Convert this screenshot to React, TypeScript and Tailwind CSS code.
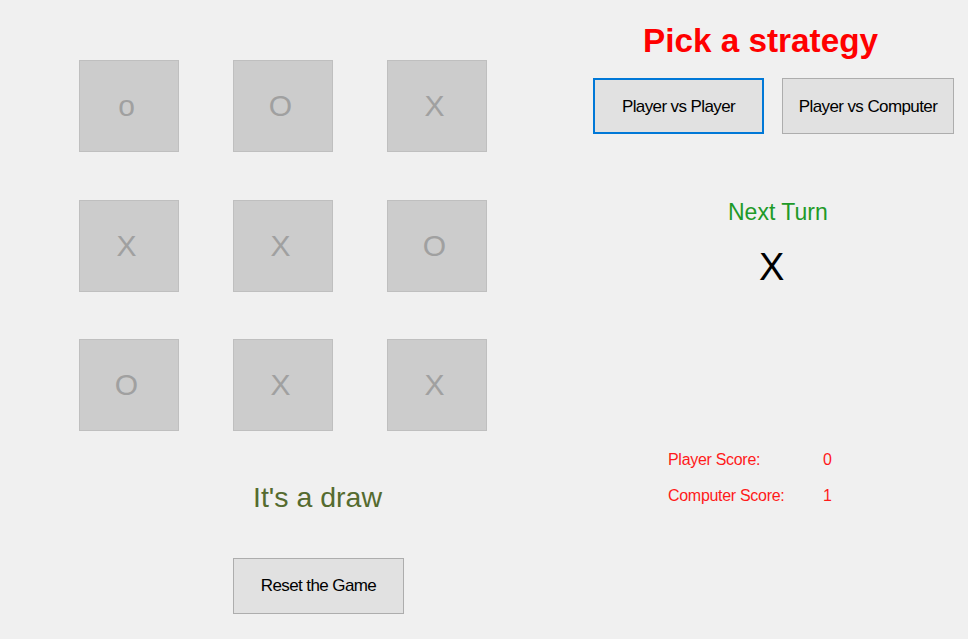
import React, { useState } from 'react'

const startBoard = ['o', 'O', 'X', 'X', 'X', 'O', 'O', 'X', 'X']

export default function App() {
  const [board] = useState(startBoard)
  const [mode, setMode] = useState('pvp')

  return (
    <div className="w-[968px] h-[639px] bg-[#f0f0f0] flex font-['Liberation_Sans',Arial,sans-serif] overflow-hidden">
      {/* board side */}
      <div className="w-[593px] pl-[79px] pt-[60px] flex flex-col">
        <div className="grid grid-cols-[100px_100px_100px] gap-x-[54px] gap-y-[47.5px]">
          {board.map((c, i) => (
            <button
              key={i}
              className="h-[92px] pr-[5px] bg-[#cccccc] border border-[#bfbfbf] text-[#a0a0a0] text-[30px] leading-none flex items-center justify-center"
            >
              {c}
            </button>
          ))}
        </div>
        <div className="ml-[154px] w-[171px] flex flex-col items-center">
          <div className="mt-[52px] mr-[2px] text-[28.5px] leading-none text-[#556b2f]">It's a draw</div>
          <button className="mt-[46px] w-[171px] h-[56px] bg-[#e1e1e1] border border-[#adadad] text-[17px] tracking-[-0.6px] text-black">
            Reset the Game
          </button>
        </div>
      </div>

      {/* strategy side */}
      <div className="flex-1 pt-[24px] flex flex-col">
        <h1 className="ml-[50px] text-[33.3px] leading-none font-bold text-[#ff0000]">Pick a strategy</h1>
        <div className="mt-[21px] flex gap-[18px]">
          <button
            onClick={() => setMode('pvp')}
            className={mode === 'pvp'
              ? 'w-[171px] h-[56px] bg-[#e1e1e1] border-2 border-[#0078d7] text-[17px] tracking-[-0.6px] text-black'
              : 'w-[171px] h-[56px] bg-[#e1e1e1] border border-[#adadad] text-[17px] tracking-[-0.6px] text-black'}
          >
            Player vs Player
          </button>
          <button
            onClick={() => setMode('pvc')}
            className={mode === 'pvc'
              ? 'w-[172px] h-[56px] bg-[#e1e1e1] border-2 border-[#0078d7] text-[17px] tracking-[-0.6px] text-black'
              : 'w-[172px] h-[56px] bg-[#e1e1e1] border border-[#adadad] text-[17px] tracking-[-0.6px] text-black'}
          >
            Player vs Computer
          </button>
        </div>
        <div className="mt-[67px] ml-[135px] text-[23px] leading-none text-[#1e9a28]">Next Turn</div>
        <div className="mt-[24px] ml-[166px] text-[38px] leading-none text-black">X</div>
        <div className="mt-[166px] ml-[75px] flex flex-col gap-[20px] text-[16px] leading-none tracking-[-0.3px] text-[#ff1a1a]">
          <div className="flex">
            <span className="w-[155px]">Player Score:</span>
            <span>0</span>
          </div>
          <div className="flex">
            <span className="w-[155px]">Computer Score:</span>
            <span>1</span>
          </div>
        </div>
      </div>
    </div>
  )
}
